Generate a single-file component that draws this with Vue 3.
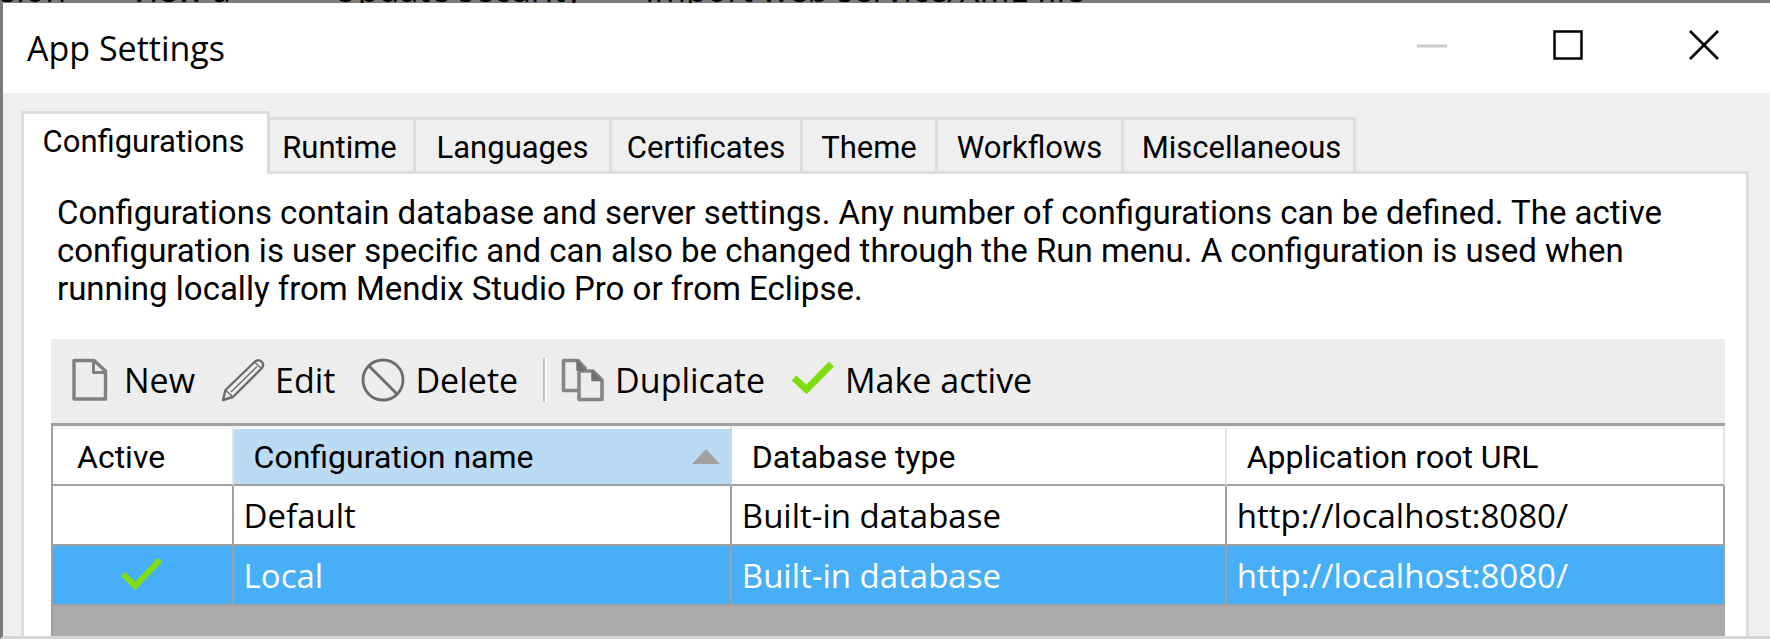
<script setup>
import { ref } from 'vue'

const tabs = [
  { label: 'Configurations', size: 'w-config' },
  { label: 'Runtime', size: 'w-runtime' },
  { label: 'Languages', size: 'w-lang' },
  { label: 'Certificates', size: 'w-cert' },
  { label: 'Theme', size: 'w-theme' },
  { label: 'Workflows', size: 'w-flow' },
  { label: 'Miscellaneous', size: 'w-misc' },
]
const activeTab = ref('Configurations')

const rows = [
  { name: 'Default', database: 'Built-in database', url: 'http://localhost:8080/' },
  { name: 'Local', database: 'Built-in database', url: 'http://localhost:8080/' },
]
const activeName = ref('Local')
const selected = ref('Local')
</script>

<template>
  <div class="desktop">
    <div class="backdrop" aria-hidden="true">
      <span class="b1">sion</span>
      <span class="b2">View a</span>
      <span class="b3">Update security</span>
      <span class="b4">Import web service/XML file</span>
    </div>
    <section class="window">
      <header class="titlebar">
        <h1>App Settings</h1>
        <div class="controls">
          <button type="button" aria-label="Minimize" disabled>
            <svg width="30" height="30" viewBox="0 0 30 30"><path d="M0 16H30" stroke="#cbcbcb" stroke-width="3" /></svg>
          </button>
          <button type="button" aria-label="Maximize">
            <svg width="30" height="30" viewBox="0 0 30 30"><path d="M1.5 1.5H28.5V28.5H1.5Z" fill="none" stroke="#000" stroke-width="2.5" /></svg>
          </button>
          <button type="button" aria-label="Close">
            <svg width="30" height="30" viewBox="0 0 30 30"><path d="M1 1L29 29M29 1L1 29" stroke="#000" stroke-width="2.6" /></svg>
          </button>
        </div>
      </header>

      <div class="body">
        <div class="tabs" role="tablist">
          <button
            v-for="tab in tabs"
            :key="tab.label"
            type="button"
            role="tab"
            :aria-selected="activeTab === tab.label"
            :class="['tab', tab.size, { active: activeTab === tab.label }]"
            @click="activeTab = tab.label"
          >{{ tab.label }}</button>
        </div>

        <div class="panel" role="tabpanel">
          <p class="intro">
            Configurations contain database and server settings. Any number of configurations can be defined.
            The active configuration is user specific and can also be changed through the Run menu. A
            configuration is used when running locally from Mendix Studio Pro or from Eclipse.
          </p>

          <div class="toolbar" role="toolbar">
            <button type="button" class="tool">
              <svg width="44" height="44" viewBox="0 0 44 44" fill="none" stroke="#808080" stroke-width="3.4" stroke-linejoin="round">
                <path d="M4 2.5H24L35.5 13V41H4Z" />
                <path d="M23.5 3V14.5H35" stroke-width="3" />
              </svg>
              New
            </button>
            <button type="button" class="tool">
              <svg width="44" height="44" viewBox="0 0 44 44" fill="none" stroke="#6c6c6c" stroke-width="2.4" stroke-linejoin="round">
                <path d="M2 42L4.500 32L34 3.500Q37.500 .8 40.500 3.500Q43.500 6.500 41 10L12 39Z" />
                <path d="M10 34L36 8.500M33.500 4L40.500 10.500M4.500 32L12 39" stroke-width="1.4" />
              </svg>
              Edit
            </button>
            <button type="button" class="tool">
              <svg width="44" height="44" viewBox="0 0 44 44" fill="none" stroke="#6c6c6c" stroke-width="2.8">
                <circle cx="22" cy="22" r="20" />
                <path d="M8 8L36 36" />
              </svg>
              Delete
            </button>
            <span class="divider"></span>
            <button type="button" class="tool">
              <svg width="44" height="44" viewBox="0 0 44 44" fill="none" stroke="#858585" stroke-width="3.6" stroke-linejoin="round">
                <path d="M17 32.500H2.500V2.500H17L25 11.500" />
                <path d="M18 13H32L41 22V41.500H18Z" />
                <path d="M16 2.500V12H24ZM31 13V22.500H40Z" fill="#707070" stroke="#707070" stroke-width="1.500" />
              </svg>
              Duplicate
            </button>
            <button type="button" class="tool">
              <svg width="44" height="44" viewBox="0 0 44 44" fill="none" stroke="#80dc0c" stroke-width="7">
                <path d="M3 20L15.500 31.500L40.500 6" />
              </svg>
              Make active
            </button>
          </div>

          <div class="grid">
            <table>
              <colgroup>
                <col class="c-active" />
                <col class="c-name" />
                <col class="c-db" />
                <col class="c-url" />
              </colgroup>
              <thead>
                <tr>
                  <th scope="col" class="h-active">Active</th>
                  <th scope="col" class="sorted" aria-sort="ascending">
                    <div class="sort">
                      Configuration name
                      <svg width="28" height="15" viewBox="0 0 28 15"><path d="M0 15L14 0L28 15Z" fill="#a0a0a0" /></svg>
                    </div>
                  </th>
                  <th scope="col">Database type</th>
                  <th scope="col">Application root URL</th>
                </tr>
              </thead>
              <tbody>
                <tr v-for="row in rows" :key="row.name" :class="{ selected: selected === row.name }" @click="selected = row.name">
                  <td class="mark">
                    <svg v-if="activeName === row.name" width="44" height="36" viewBox="0 0 44 36" fill="none" stroke="#80dc0c" stroke-width="6">
                      <path d="M3 16L15 28L40 2" />
                    </svg>
                  </td>
                  <td>{{ row.name }}</td>
                  <td>{{ row.database }}</td>
                  <td>{{ row.url }}</td>
                </tr>
              </tbody>
            </table>
          </div>
        </div>
      </div>
    </section>
  </div>
</template>

<style>
html,
body {
  margin: 0;
}
</style>

<style scoped>
* {
  box-sizing: border-box;
}
.desktop {
  display: flex;
  flex-direction: column;
  min-height: 100vh;
  background: #7b7b7b;
  color: #000;
  font-family: "Open Sans", "Noto Sans", sans-serif;
  font-size: 34px;
}
.backdrop {
  display: flex;
  align-items: flex-end;
  height: 3px;
  overflow: hidden;
  white-space: nowrap;
  line-height: 28px;
}
.b1 { width: 129px; }
.b2 { width: 204px; }
.b3 { width: 312px; }
.window {
  flex: 1;
  display: flex;
  flex-direction: column;
  border-left: 3px solid #7b7b7b;
  border-bottom: 3px solid #d5d5d5;
  background: #efefef;
}
button {
  margin: 0;
  padding: 0;
  border: 0;
  background: none;
  color: inherit;
  font: inherit;
}
svg {
  display: block;
  flex: none;
}
.titlebar {
  display: flex;
  align-items: center;
  justify-content: space-between;
  height: 90px;
  padding-left: 24px;
  background: #fff;
}
h1 {
  margin: 0;
  font-size: 34px;
  font-weight: 400;
  line-height: 48px;
}
.controls {
  display: flex;
  align-self: flex-start;
  gap: 4px;
}
.controls button {
  display: flex;
  align-items: center;
  justify-content: center;
  width: 132px;
  height: 84px;
}
.body {
  flex: 1;
  display: flex;
  flex-direction: column;
  padding: 18px 21px 0 18px;
}
.tabs {
  display: flex;
  align-items: flex-end;
  margin-bottom: -3px;
}
.tab {
  height: 57px;
  padding: 4px 0 0;
  border: 3px solid #dcdcdc;
  border-left: 0;
  background: #efefef;
  font-family: Roboto, "Liberation Sans", sans-serif;
  font-size: 31px;
  line-height: 46px;
  white-space: nowrap;
}
.tab.active {
  position: relative;
  height: 63px;
  padding: 0 4px 4px 0;
  border-left: 3px solid #dcdcdc;
  border-bottom: 0;
  background: #fff;
}
.w-config { width: 249px; }
.w-runtime { width: 146px; padding-right: 4px; }
.w-lang { width: 196px; }
.w-cert { width: 191px; }
.w-theme { width: 135px; }
.w-flow { width: 186px; }
.w-misc { width: 232px; padding-left: 6px; }
.panel {
  flex: 1;
  display: flex;
  flex-direction: column;
  padding: 20px 21px 0 27px;
  border: 3px solid #dcdcdc;
  border-bottom: 0;
  background: #fff;
}
.intro {
  margin: 0 0 31px;
  padding-left: 6px;
  font-family: Roboto, "Liberation Sans", sans-serif;
  font-size: 33px;
  line-height: 38px;
}
.toolbar {
  display: flex;
  align-items: center;
  height: 84px;
  padding: 0 0 2px 19px;
  background: #ededed;
}
.tool {
  display: flex;
  align-items: center;
  gap: 10px;
  line-height: 48px;
  white-space: nowrap;
}
.tool + .tool {
  margin-left: 26px;
}
.divider {
  width: 4px;
  height: 44px;
  margin: 0 14px 0 25px;
  border-left: 2px solid #c0c0c0;
  border-right: 2px solid #fff;
}
.grid {
  flex: 1;
  border-top: 3px solid #a0a0a0;
  border-left: 2px solid #a0a0a0;
  background: #ababab;
}
table {
  width: 100%;
  border-collapse: separate;
  border-spacing: 0;
  table-layout: fixed;
}
.c-active { width: 10.8%; }
.c-name { width: 29.8%; }
.c-db { width: 29.6%; }
th {
  height: 60px;
  padding: 0 10px 0 20px;
  border-top: 3px solid #f6f6f6;
  border-right: 2px solid #e4e4e4;
  border-bottom: 2px solid #a0a0a0;
  background: #fff;
  font-family: Roboto, "Liberation Sans", sans-serif;
  font-size: 32px;
  font-weight: 400;
  text-align: left;
  white-space: nowrap;
}
.h-active {
  padding-left: 24px;
}
.sorted {
  border-right-color: #badbf3;
  background: #badbf3;
}
.sort {
  display: flex;
  align-items: center;
  justify-content: space-between;
}
td {
  height: 60px;
  padding: 2px 10px 0;
  border-right: 2px solid #a0a0a0;
  border-bottom: 2px solid #a0a0a0;
  background: #fff;
  font-size: 33px;
  line-height: 44px;
  white-space: nowrap;
}
.mark svg {
  margin: 0 auto;
}
.selected td {
  background: #47aef8;
  color: #fff;
}
</style>
